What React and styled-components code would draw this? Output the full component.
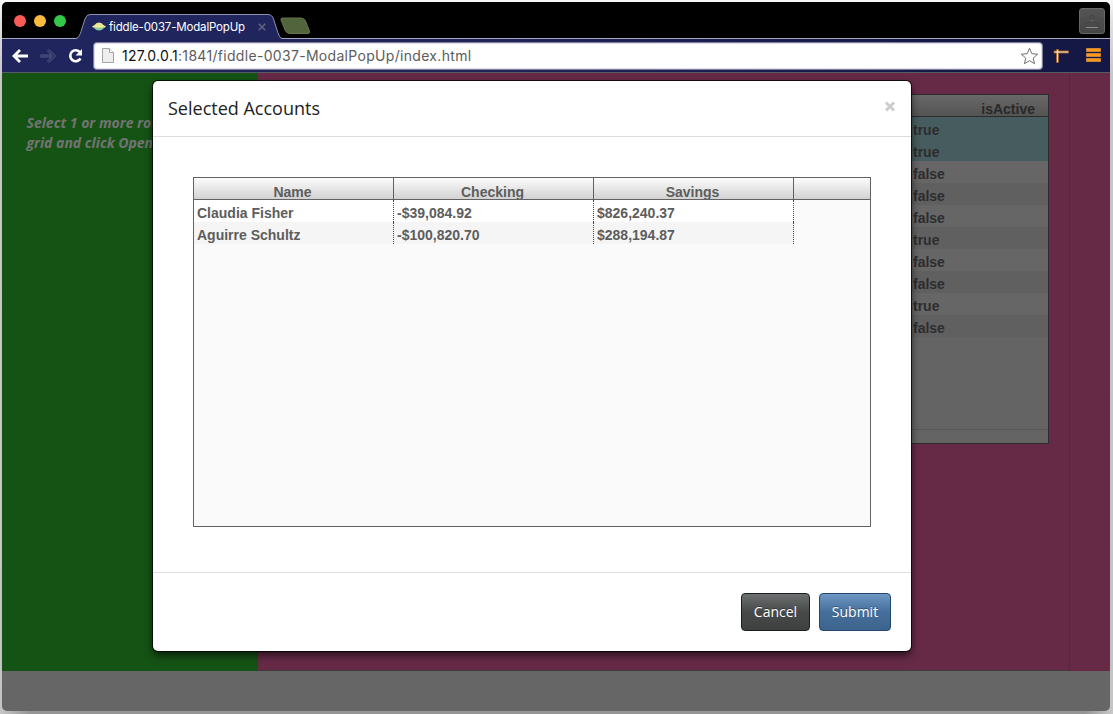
import React from 'react';
import styled, { createGlobalStyle } from 'styled-components';

const GlobalStyle = createGlobalStyle`
  * { box-sizing: border-box; }
  html, body { margin: 0; height: 714px; overflow: hidden; background: #c4c4c4; }
  #root { height: 714px; }
`;

const Desktop = styled.div`
  width: 1113px;
  height: 714px;
  padding: 2px 3px 3px 2px;
  background:
    linear-gradient(90deg, #c6c6c6 0, #959595 30px, #959595 1085px, #c9c9c9 1113px) 0 711px / 1113px 3px no-repeat,
    linear-gradient(180deg, #f7f7f7 0, #e2e2e2 20px, #c6c6c6 75px, #c4c4c4 714px);
`;

const Window = styled.div`
  position: relative;
  height: 709px;
  display: flex;
  flex-direction: column;
  border-radius: 5px;
  overflow: hidden;
  background: #666;
`;

const TabStrip = styled.div`
  height: 37px;
  flex: none;
  display: flex;
  align-items: flex-start;
  background: #000;
  border-bottom: 1px solid #a5a8bd;
`;

const Lights = styled.div`
  display: flex;
  gap: 8px;
  padding: 13px 0 0 12px;
  width: 74px;
`;

const Light = styled.span`
  width: 12px;
  height: 12px;
  border-radius: 50%;
  background: ${(p) => p.$color};
`;

const Tab = styled.div`
  position: relative;
  width: 206px;
  height: 37px;
  flex: none;
  margin-bottom: -1px;
  padding: 12px 0 0 16px;
  display: flex;
  align-items: center;
`;

const TabShape = styled.svg`
  position: absolute;
  left: 0;
  top: 0;
`;

const TabTitle = styled.span`
  position: relative;
  width: 149px;
  margin-left: 3px;
  color: #fff;
  font: 11.5px/16px Inter, 'Liberation Sans', sans-serif;
  letter-spacing: -0.17px;
  white-space: nowrap;
`;

const Icon = styled.svg`
  position: relative;
  flex: none;
  display: block;
`;

const NewTab = styled.svg`
  margin: 15px 0 0 -3px;
`;

const Profile = styled.div`
  width: 26px;
  height: 26px;
  margin: 6px 5px 0 auto;
  border-radius: 3px;
  border: 1px solid #666;
  background: linear-gradient(#555, #454545);
`;

const Toolbar = styled.div`
  height: 34px;
  flex: none;
  display: flex;
  align-items: center;
  padding: 0 8px 0 9px;
  background: linear-gradient(90deg, #20255e, #1f2459 45%, #141845 88%, #151844);
  border-bottom: 1px solid #565b66;
`;

const NavIcons = styled.div`
  display: flex;
  align-items: center;
  gap: 10px;
  width: 82px;
`;

const AddressBar = styled.div`
  width: 950px;
  height: 28px;
  display: flex;
  align-items: center;
  padding: 0 3px 0 8px;
  border: 1px solid #7e819c;
  border-radius: 4px;
  background: #fff;
  box-shadow: inset 0 0 0 1px #dfe0ea;
`;

const Url = styled.span`
  flex: 1;
  margin-left: 8px;
  color: #5c5c5c;
  font: 14px/20px Inter, 'Liberation Sans', sans-serif;
  letter-spacing: 0.31px;
  white-space: nowrap;
`;

const Host = styled.span`
  color: #111;
`;

const Extensions = styled.div`
  margin-left: 10px;
  display: flex;
  align-items: center;
  gap: 15px;
`;

const Page = styled.div`
  height: 598px;
  flex: none;
  display: flex;
  background: #662a47;
`;

const SidePanel = styled.aside`
  width: 256px;
  padding: 40px 0 0 24.5px;
  background: #155314;
  flex: none;
`;

const Instruction = styled.p`
  margin: 0;
  color: #737373;
  font: italic bold 14px/20px 'Open Sans', sans-serif;
  white-space: nowrap;
`;

const MainPanel = styled.main`
  width: 812px;
  padding: 21px 20px 0 0;
  display: flex;
  justify-content: flex-end;
  border-right: 1px solid #44313b;
  border-bottom: 1px solid #413a3f;
`;

const BackGrid = styled.div`
  width: 760px;
  height: 350px;
  display: flex;
  flex-direction: column;
  border: 1px solid #2c2c2c;
  background: #646464;
  color: #2d2d2d;
  font: bold 14px/22px 'Liberation Sans', Arial, sans-serif;
`;

const BackHead = styled.div`
  height: 22px;
  flex: none;
  padding: 4px 13px 0 0;
  overflow: hidden;
  line-height: 20px;
  text-align: right;
  color: #292929;
  background: linear-gradient(#686868, #545454);
  border-bottom: 1px solid #2c2c2c;
`;

const BackRow = styled.div`
  height: 22px;
  flex: none;
  padding: 3px 0 0 623px;
  line-height: 20px;
  overflow: hidden;
  background: ${(p) => (p.$selected ? '#475c5e' : p.$odd ? '#606060' : '#666')};
`;

const BackFoot = styled.div`
  height: 14px;
  margin-top: auto;
  border-top: 1px solid #585858;
`;

const Modal = styled.section`
  position: absolute;
  left: 151px;
  top: 79px;
  width: 758px;
  height: 570px;
  display: flex;
  flex-direction: column;
  background: #fff;
  border-radius: 5px;
  box-shadow: 0 0 0 1px rgba(0, 0, 0, 0.75), 0 4px 9px rgba(0, 0, 0, 0.65);
`;

const ModalHeader = styled.header`
  height: 56px;
  flex: none;
  display: flex;
  justify-content: space-between;
  padding: 14px 15px 0;
  border-bottom: 1px solid #ddd;
`;

const Title = styled.h4`
  margin: 0;
  color: #222;
  font: 18px/26px 'Open Sans', sans-serif;
`;

const ModalBody = styled.div`
  height: 435px;
  flex: none;
  padding: 40px;
`;

const Grid = styled.div`
  width: 678px;
  height: 350px;
  border: 1px solid #626262;
  background: #fafafa;
  color: #5d5d5d;
  font: bold 14px/22px 'Liberation Sans', Arial, sans-serif;
`;

const GridHead = styled.div`
  height: 22px;
  display: flex;
  border-bottom: 1px solid #626262;
  background: linear-gradient(#fcfcfc, #d2d2d2);
`;

const HeadCell = styled.div`
  width: 200px;
  height: 21px;
  padding: 4px 2px 0 0;
  overflow: hidden;
  line-height: 20px;
  text-align: center;
  border-right: 1px solid #626262;
`;

const GridRow = styled.div`
  width: 600px;
  height: 22px;
  display: flex;
  background: ${(p) => (p.$odd ? '#f5f5f5' : '#fff')};
`;

const Cell = styled.div`
  width: 200px;
  padding: 3px 0 0 3px;
  overflow: hidden;
  line-height: 20px;
  border-right: 1px dotted #444;
`;

const ModalFooter = styled.footer`
  flex: 1;
  display: flex;
  justify-content: flex-end;
  gap: 9px;
  padding: 20px 20px 0;
  border-top: 1px solid #ddd;
`;

const Button = styled.button`
  width: ${(p) => (p.$primary ? 72 : 69)}px;
  height: 38px;
  padding: 0 0 1px;
  border: 1px solid ${(p) => (p.$primary ? '#204671' : '#1c1d1d')};
  border-radius: 4px;
  background: ${(p) => (p.$primary
    ? 'linear-gradient(#6e97c3, #446e9b 50%, #3e648d)'
    : 'linear-gradient(#6d7070, #474949 50%, #3f4141)')};
  color: #fff;
  font: 14px/20px 'Open Sans', sans-serif;
  text-shadow: 0 -1px 0 rgba(0, 0, 0, 0.3);
`;

const columns = ['Name', 'Checking', 'Savings'];
const accounts = [
  ['Claudia Fisher', '-$39,084.92', '$826,240.37'],
  ['Aguirre Schultz', '-$100,820.70', '$288,194.87'],
];
const active = [true, true, false, false, false, true, false, false, true, false];

export default function App() {
  return (
    <Desktop>
      <GlobalStyle />
      <Window>
        <TabStrip>
          <Lights>
            <Light $color="#fc5b57" />
            <Light $color="#fdbc40" />
            <Light $color="#34c84a" />
          </Lights>
          <Tab>
            <TabShape width="206" height="37" viewBox="0 0 206 37">
              <path d="M0 37C3 36 4 32 5 29.500L9 17Q10.500 12.500 14 12.500H192Q196 12.500 197.500 17L202 31Q203.500 36 206 37Z" fill="#20255e" />
              <path d="M0 36.500C3 36 4 32 5 29.500L9 17Q10.500 12.500 14 12.500H192Q196 12.500 197.500 17L202 31Q203.500 36 206 36.500" fill="none" stroke="#8d91ad" />
            </TabShape>
            <Icon width="14" height="9" viewBox="0 0 14 9">
              <path d="M2.500 3Q4 .5 7 .5T11.500 3L14 4.500Q13 6 7 6T0 4.500Z" fill="#e9e88e" />
              <path d="M0 4.500Q7 7 14 4.500L11.500 6.500Q10 8.500 7 8.500T2.500 6.500Z" fill="#8ccaa0" />
              <path d="M3 4.500H11" stroke="#f4f0a0" />
            </Icon>
            <TabTitle>fiddle-0037-ModalPopUp</TabTitle>
            <Icon width="8" height="8" viewBox="0 0 8 8">
              <path d="M.7.7 7.300 7.300M7.300.7.7 7.300" stroke="#62657f" strokeWidth="1.500" />
            </Icon>
          </Tab>
          <NewTab width="32" height="18" viewBox="0 0 32 18">
            <path d="M3.500 1H22Q25 1 26.500 4L30.500 14Q31 16.500 29 16.500H11Q8 16.500 6.500 14L2 3Q1.500 1 3.500 1Z" fill="#52643c" stroke="#66754d" />
          </NewTab>
          <Profile>
            <svg width="24" height="24" viewBox="0 0 24 24" fill="none">
              <path d="M9.500 9Q9.500 6.500 12 6.500T14.500 9 12 12 9.500 9M6 17Q6 13 12 13T18 17" stroke="#3c3c3c" strokeWidth=".8" />
              <path d="M6 18.500H18" stroke="#8c8c8c" />
              <path d="M9.500 10.500Q12 14 14.500 10.500" stroke="#707070" strokeWidth=".8" />
            </svg>
          </Profile>
        </TabStrip>
        <Toolbar>
          <NavIcons>
            <Icon width="18" height="16" viewBox="0 0 18 16" fill="none">
              <path d="M9 2 3 8 9 14M3.500 8H17" stroke="#fff" strokeWidth="2.800" />
            </Icon>
            <Icon width="18" height="16" viewBox="0 0 18 16" fill="none">
              <path d="M9 2 15 8 9 14M1 8H14.500" stroke="#555a83" strokeWidth="2.800" />
              <path d="M9 2 15 8 9 14M1 8H14.500" stroke="#292e66" strokeWidth="1.200" />
            </Icon>
            <Icon width="17" height="16" viewBox="0 0 17 16" fill="none">
              <path d="M13 4.200A5.500 5.500 0 1 0 13.500 10.500" stroke="#fff" strokeWidth="2.600" />
              <path d="M15 1V7.500H8.500Z" fill="#fff" />
            </Icon>
          </NavIcons>
          <AddressBar>
            <Icon width="12" height="15" viewBox="0 0 12 15">
              <path d="M.5.5H7.500L11.500 4.500V14.500H.5Z" fill="#eee" stroke="#a5a5a5" />
              <path d="M7.500.5V4.500H11.500" fill="#fff" stroke="#a5a5a5" />
            </Icon>
            <Url><Host>127.0.0.1</Host>:1841/fiddle-0037-ModalPopUp/index.html</Url>
            <Icon width="19" height="18" viewBox="0 0 19 18">
              <path d="M9.500 1.200 11.800 6.700 17.700 7.200 13.200 11.100 14.600 16.700 9.500 13.700 4.400 16.700 5.800 11.100 1.300 7.200 7.200 6.700Z" fill="#fff" stroke="#707070" />
            </Icon>
          </AddressBar>
          <Extensions>
            <Icon width="17" height="16" viewBox="0 0 17 16">
              <path d="M3.500 1.500H5.500V3H15.500V5H5.500V14.500H3.500V5H1V3H3.500Z" fill="#f6d9b4" stroke="#a0602f" strokeWidth=".9" />
            </Icon>
            <Icon width="17" height="15" viewBox="0 0 17 15">
              <path d="M1.500 .5H15.500V3.500H1.500ZM1.500 5.500H15.500V8.500H1.500ZM1.500 10.500H15.500V13.500H1.500Z" fill="#ff9818" stroke="#cf8a3b" strokeWidth=".9" strokeLinejoin="round" />
            </Icon>
          </Extensions>
        </Toolbar>
        <Page>
          <SidePanel>
            <Instruction>Select 1 or more rows in the<br />grid and click Open Modal</Instruction>
          </SidePanel>
          <MainPanel>
            <BackGrid>
              <BackHead>isActive</BackHead>
              {active.map((value, i) => (
                <BackRow key={i} $selected={i < 2} $odd={i % 2 === 1}>{String(value)}</BackRow>
              ))}
              <BackFoot />
            </BackGrid>
          </MainPanel>
        </Page>
        <Modal>
          <ModalHeader>
            <Title>Selected Accounts</Title>
            <Icon width="12" height="24" viewBox="0 0 12 24">
              <path d="M2 7.500 10 15.500M10 7.500 2 15.500" stroke="#ccc" strokeWidth="2.800" />
            </Icon>
          </ModalHeader>
          <ModalBody>
            <Grid>
              <GridHead>
                {columns.map((name) => <HeadCell key={name}>{name}</HeadCell>)}
              </GridHead>
              {accounts.map((row, i) => (
                <GridRow key={row[0]} $odd={i === 1}>
                  {row.map((value) => <Cell key={value}>{value}</Cell>)}
                </GridRow>
              ))}
            </Grid>
          </ModalBody>
          <ModalFooter>
            <Button>Cancel</Button>
            <Button $primary>Submit</Button>
          </ModalFooter>
        </Modal>
      </Window>
    </Desktop>
  );
}
